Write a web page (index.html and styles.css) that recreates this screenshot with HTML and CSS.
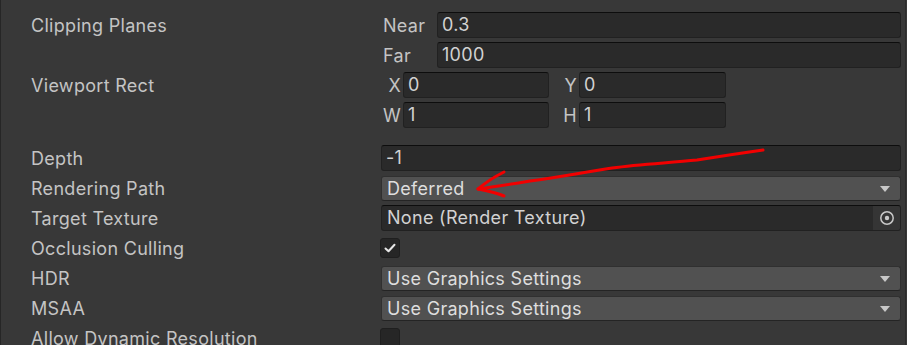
FILE: index.html
```html
<!DOCTYPE html>
<html lang="en">
<head>
    <meta charset="UTF-8">
    <title>Camera Inspector</title>
    <link rel="stylesheet" href="styles.css">
</head>
<body>
<div class="inspector">
    <div class="row">
        <div class="label">Clipping Planes</div>
        <div class="value">
            <div class="line">
                <span class="sublabel">Near</span>
                <div class="field">0.3</div>
            </div>
            <div class="line">
                <span class="sublabel">Far</span>
                <div class="field">1000</div>
            </div>
        </div>
    </div>
    <div class="row">
        <div class="label">Viewport Rect</div>
        <div class="value">
            <div class="line rect">
                <span class="axis">X</span>
                <div class="field">0</div>
                <span class="axis">Y</span>
                <div class="field">0</div>
            </div>
            <div class="line rect">
                <span class="axis">W</span>
                <div class="field">1</div>
                <span class="axis">H</span>
                <div class="field">1</div>
            </div>
        </div>
    </div>
    <div class="row spaced">
        <div class="label">Depth</div>
        <div class="value">
            <div class="line"><div class="field">-1</div></div>
        </div>
    </div>
    <div class="row">
        <div class="label">Rendering Path</div>
        <div class="value">
            <div class="line"><div class="dropdown">Deferred</div></div>
        </div>
    </div>
    <div class="row">
        <div class="label">Target Texture</div>
        <div class="value">
            <div class="line">
                <div class="field object">
                    <span class="object-name">None (Render Texture)</span>
                    <span class="picker">
                        <svg width="16" height="16" viewBox="0 0 16 16">
                            <circle cx="8" cy="8" r="6.2" fill="none" stroke="#c8c8c8" stroke-width="1.5"/>
                            <circle cx="8" cy="8" r="2.2" fill="#c8c8c8"/>
                        </svg>
                    </span>
                </div>
            </div>
        </div>
    </div>
    <div class="row">
        <div class="label">Occlusion Culling</div>
        <div class="value">
            <div class="line">
                <span class="checkbox">
                    <svg width="14" height="14" viewBox="0 0 14 14">
                        <path d="M2.5 7.5 L5.5 10.3 L11.5 3.8" fill="none" stroke="#e6e6e6" stroke-width="2" stroke-linecap="round" stroke-linejoin="round"/>
                    </svg>
                </span>
            </div>
        </div>
    </div>
    <div class="row">
        <div class="label">HDR</div>
        <div class="value">
            <div class="line"><div class="dropdown">Use Graphics Settings</div></div>
        </div>
    </div>
    <div class="row">
        <div class="label">MSAA</div>
        <div class="value">
            <div class="line"><div class="dropdown">Use Graphics Settings</div></div>
        </div>
    </div>
    <div class="row">
        <div class="label">Allow Dynamic Resolution</div>
        <div class="value">
            <div class="line"><span class="checkbox"></span></div>
        </div>
    </div>

    <!-- hand drawn annotation -->
    <svg class="scribble" width="907" height="345" viewBox="0 0 907 345">
        <path d="M763 150 C742 153 722 156 697 160 C668 163 640 164 612 168 C585 172 560 177 530 181 C512 184 494 187 478 189"
              fill="none" stroke="#f20000" stroke-width="3" stroke-linecap="round"/>
        <path d="M504 172 C494 177 485 183 478 189 C488 191 497 193 504 196"
              fill="none" stroke="#f20000" stroke-width="3" stroke-linecap="round" stroke-linejoin="round"/>
    </svg>
</div>
</body>
</html>
```

FILE: styles.css
```css
body {
    margin: 0;
    background: #383838;
    font-family: Inter, "Noto Sans", sans-serif;
    font-size: 18px;
    letter-spacing: 0.3px;
    color: #c4c4c4;
}

.inspector {
    position: relative;
    width: 906px;
    height: 345px;
    box-sizing: border-box;
    padding: 10px 4px 0 30px;
    border-left: 1px solid #262626;
    border-right: 1px solid #2c2c2c;
    overflow: hidden;
}

.row {
    display: flex;
}

.row.spaced {
    margin-top: 13px;
}

.label {
    width: 350px;
    height: 30px;
    line-height: 31px;
    flex-shrink: 0;
    white-space: nowrap;
}

.value {
    flex: 1;
}

.line {
    height: 30px;
    display: flex;
    align-items: center;
}

.sublabel {
    width: 54px;
    padding-left: 2px;
    flex-shrink: 0;
}

.line.rect {
    display: grid;
    grid-template-columns: 22px 146px 30px 147px;
    align-items: center;
}

.axis {
    text-align: right;
    padding-right: 2px;
}

.field {
    flex: 1;
    height: 26px;
    box-sizing: border-box;
    line-height: 24px;
    padding: 0 4px;
    background: #2a2a2a;
    border: 1px solid #212121;
    border-top-color: #0d0d0d;
    border-radius: 3px;
    color: #d2d2d2;
}

.field.object {
    display: flex;
    padding-right: 0;
    overflow: hidden;
}

.object-name {
    flex: 1;
    padding-left: 1px;
}

.picker {
    width: 27px;
    display: flex;
    align-items: center;
    justify-content: center;
    background: #353535;
}

.dropdown {
    position: relative;
    flex: 1;
    height: 25px;
    box-sizing: border-box;
    line-height: 23px;
    padding: 0 5px;
    background: #515151;
    border: 1px solid #303030;
    border-bottom-color: #242424;
    border-radius: 3px;
    color: #dedede;
}

.dropdown::after {
    content: "";
    position: absolute;
    right: 10px;
    top: 9px;
    border-left: 5px solid transparent;
    border-right: 5px solid transparent;
    border-top: 6px solid #c8c8c8;
}

.checkbox {
    width: 20px;
    height: 20px;
    box-sizing: border-box;
    margin-left: -1px;
    display: flex;
    align-items: center;
    justify-content: center;
    background: #262626;
    border: 1px solid #1f1f1f;
    border-radius: 3px;
}

.scribble {
    position: absolute;
    left: -1px;
    top: 0;
    pointer-events: none;
}
```
